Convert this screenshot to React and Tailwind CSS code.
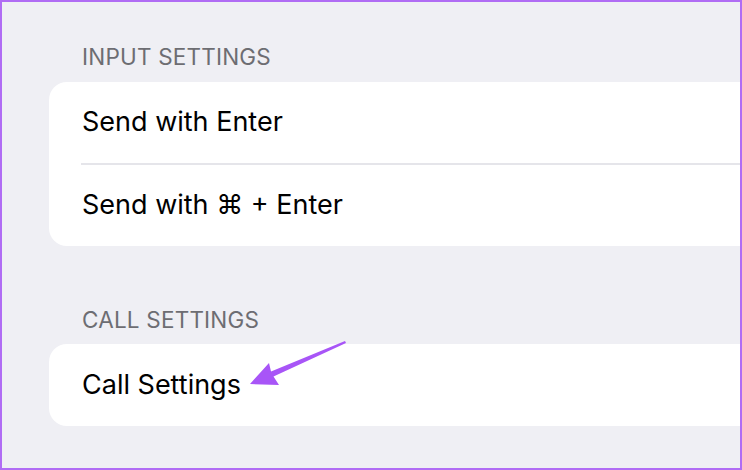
import React from 'react';

const rows = ['Send with Enter', 'Send with ⌘ + Enter'];

function SectionHeader({ label, height, pb }) {
  return (
    <div className={`flex items-end ${height} ${pb} pl-[33px]`}>
      <span className="text-[22.5px] leading-[24px] text-[#6d6d72] tracking-[0.2px]">{label}</span>
    </div>
  );
}

export default function App() {
  return (
    <div
      className="relative w-[742px] h-[470px] border-2 border-[#b06cf4] bg-[#efeff4] pl-[47px] overflow-hidden"
      style={{ fontFamily: 'Inter, "Noto Sans", sans-serif' }}
    >
      <SectionHeader label="INPUT SETTINGS" height="h-[80px]" pb="pb-[13px]" />

      {/* input settings card */}
      <div className="bg-white rounded-l-[18px]">
        {rows.map((label, i) => (
          <div key={label}>
            {i > 0 && <div className="ml-[32px] h-[2px] bg-[#e5e5ea]" />}
            <div className="h-[81px] flex items-center pl-[33px] text-[27px] text-black">{label}</div>
          </div>
        ))}
      </div>

      <SectionHeader label="CALL SETTINGS" height="h-[98px]" pb="pb-[12px]" />

      {/* call settings card */}
      <div className="bg-white rounded-l-[18px] h-[82px] flex items-center pl-[33px] text-[27px] text-black">
        Call Settings
      </div>

      {/* annotation arrow */}
      <svg
        className="absolute left-0 top-0 pointer-events-none"
        width="742"
        height="470"
        viewBox="0 0 742 470"
      >
        <path
          d="M345 341 L271 371.5 L269 363 L250 384 L279 385 L273.5 376.5 L346 343 Z"
          fill="#a855f7"
          transform="translate(-2 -2)"
        />
      </svg>
    </div>
  );
}
